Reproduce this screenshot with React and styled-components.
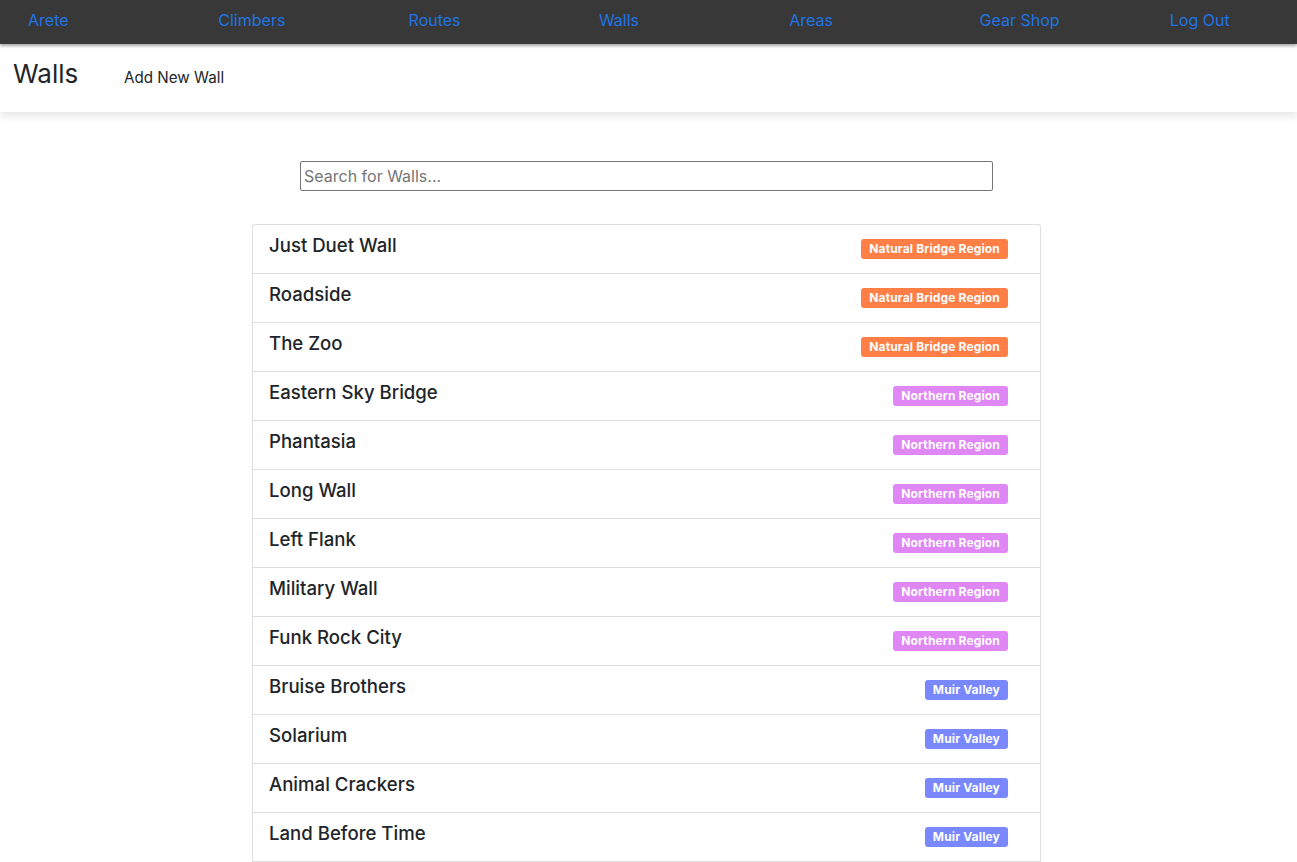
import React from "react";
import styled, { createGlobalStyle } from "styled-components";

const GlobalStyle = createGlobalStyle`
	body {
		margin: 0;
		font-family: Inter, "Liberation Sans", sans-serif;
		color: #212529;
		background: #fff;
	}
	* { box-sizing: border-box; }
`;

const NavBar = styled.nav`
	height: 44px;
	background-color: #383838;
	display: flex;
	align-items: center;
	padding-left: 28px;
	overflow: hidden;
	box-shadow: 0 2px 3px rgba(0, 0, 0, 0.35);
	position: relative;
	z-index: 2;
`;

const NavLink = styled.a`
	flex: 0 0 190.3px;
	color: #1f74e4;
	font-size: 16px;
	text-decoration: none;
	margin-top: -4px;
`;

const Header = styled.header`
	height: 68px;
	display: flex;
	align-items: baseline;
	padding: 14px 13px 0;
	box-shadow: 0 4px 8px rgba(0, 0, 0, 0.1);
`;

const Title = styled.h1`
	margin: 0;
	font-size: 26px;
	font-weight: 400;
	width: 111px;
`;

const AddLink = styled.a`
	font-size: 15.2px;
	color: #212529;
	text-decoration: none;
`;

const Main = styled.main`
	display: flex;
	flex-direction: column;
	align-items: center;
	padding: 49px 0 0;
	margin-left: -4px;
`;

const Search = styled.input`
	width: 693px;
	height: 30px;
	border: 1px solid #767676;
	border-radius: 2px;
	padding: 0 3px;
	font-size: 16px;
	font-family: Inter, "Liberation Sans", sans-serif;
	&::placeholder {
		color: #757575;
	}
`;

const List = styled.ul`
	list-style: none;
	margin: 33px 0 0;
	padding: 0;
	width: 789px;
	border: 1px solid #dfdfdf;
	border-bottom: none;
	border-radius: 3px 3px 0 0;
`;

const Item = styled.li`
	height: 49px;
	display: flex;
	justify-content: space-between;
	align-items: flex-start;
	padding: 8px 32px 0 16px;
	border-bottom: 1px solid #dfdfdf;
`;

const Name = styled.span`
	font-size: 18.6px;
	font-weight: 500;
	line-height: 24px;
`;

const badgeColors = {
	nb: "#ff7f47",
	north: "#df87f5",
	muir: "#7a88ff",
};

const Badge = styled.span`
	margin-top: 6px;
	background: ${props => badgeColors[props.kind]};
	color: #fff;
	font-size: 12px;
	font-weight: 700;
	letter-spacing: 0.15px;
	height: 20px;
	line-height: 20px;
	padding: 0 8px;
	border-radius: 3px;
`;

const regions = {
	nb: "Natural Bridge Region",
	north: "Northern Region",
	muir: "Muir Valley",
};

const walls = [
	["Just Duet Wall", "nb"],
	["Roadside", "nb"],
	["The Zoo", "nb"],
	["Eastern Sky Bridge", "north"],
	["Phantasia", "north"],
	["Long Wall", "north"],
	["Left Flank", "north"],
	["Military Wall", "north"],
	["Funk Rock City", "north"],
	["Bruise Brothers", "muir"],
	["Solarium", "muir"],
	["Animal Crackers", "muir"],
	["Land Before Time", "muir"],
];

const links = ["Arete", "Climbers", "Routes", "Walls", "Areas", "Gear Shop", "Log Out"];

const App = () => (
	<>
		<GlobalStyle />
		<NavBar>
			{links.map(l => (
				<NavLink key={l} href="#">{l}</NavLink>
			))}
		</NavBar>
		<Header>
			<Title>Walls</Title>
			<AddLink href="#">Add New Wall</AddLink>
		</Header>
		<Main>
			<Search placeholder="Search for Walls..." />
			<List>
				{walls.map(([name, kind]) => (
					<Item key={name}>
						<Name>{name}</Name>
						<Badge kind={kind}>{regions[kind]}</Badge>
					</Item>
				))}
			</List>
		</Main>
	</>
);

export default App;
